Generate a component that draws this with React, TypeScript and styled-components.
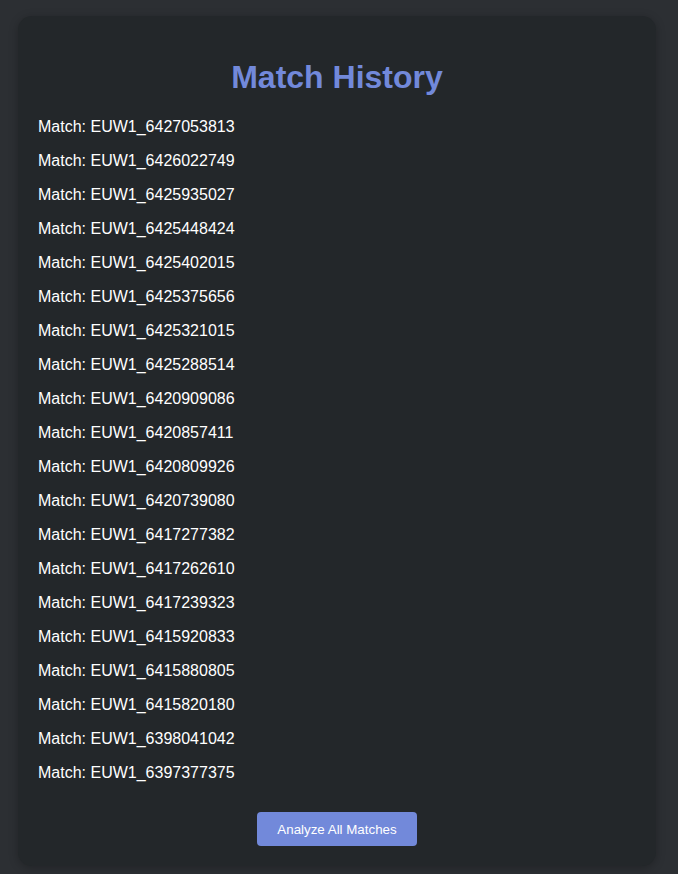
import React from 'react';
import styled, { createGlobalStyle } from 'styled-components';

const GlobalStyle = createGlobalStyle`
  * {
    box-sizing: border-box;
  }

  body {
    margin: 0;
    background: #2c2f33;
    font-family: 'Liberation Sans', Arial, sans-serif;
    color: #ffffff;
  }
`;

const StyledPage = styled.div`
  padding: 16px 22px 8px 18px;
`;

const StyledCard = styled.section`
  background: #23272a;
  border-radius: 14px;
  padding: 20px;
  box-shadow: 0 2px 10px rgba(0, 0, 0, 0.25);
  display: flex;
  flex-direction: column;
`;

const StyledTitle = styled.h1`
  margin: 22px 0 14px 0;
  color: #7289da;
  font-size: 32px;
  line-height: 38px;
  font-weight: 700;
  text-align: center;
`;

const StyledList = styled.ul`
  list-style: none;
  margin: 0;
  padding: 0;
`;

const StyledItem = styled.li`
  padding: 8px 0;
  font-size: 16px;
  line-height: 18px;
  color: #ffffff;
`;

const StyledButton = styled.button`
  align-self: center;
  margin-top: 22px;
  padding: 0 20px;
  height: 34px;
  border: none;
  border-radius: 4px;
  background: #7289da;
  color: #ffffff;
  font-family: 'Liberation Sans', Arial, sans-serif;
  font-size: 13.33px;
  cursor: pointer;
`;

const matches = [
  'EUW1_6427053813',
  'EUW1_6426022749',
  'EUW1_6425935027',
  'EUW1_6425448424',
  'EUW1_6425402015',
  'EUW1_6425375656',
  'EUW1_6425321015',
  'EUW1_6425288514',
  'EUW1_6420909086',
  'EUW1_6420857411',
  'EUW1_6420809926',
  'EUW1_6420739080',
  'EUW1_6417277382',
  'EUW1_6417262610',
  'EUW1_6417239323',
  'EUW1_6415920833',
  'EUW1_6415880805',
  'EUW1_6415820180',
  'EUW1_6398041042',
  'EUW1_6397377375',
];

const App = () => {
  return (
    <>
      <GlobalStyle />
      <StyledPage>
        <StyledCard>
          <StyledTitle>Match History</StyledTitle>
          <StyledList>
            {matches.map((id) => (
              <StyledItem key={id}>{'Match: ' + id}</StyledItem>
            ))}
          </StyledList>
          <StyledButton>Analyze All Matches</StyledButton>
        </StyledCard>
      </StyledPage>
    </>
  );
};

export default App;
